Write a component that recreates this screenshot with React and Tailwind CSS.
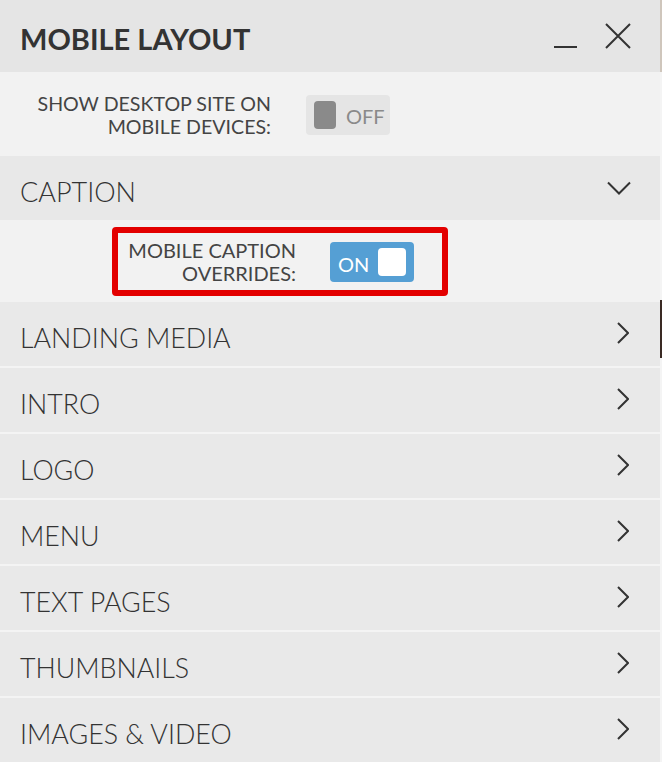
import { useState } from 'react';

const SECTIONS = ['LANDING MEDIA', 'INTRO', 'LOGO', 'MENU', 'TEXT PAGES', 'THUMBNAILS', 'IMAGES & VIDEO'];

function Chevron({ dir = 'right' }) {
  if (dir === 'down') {
    return (
      <svg width="24" height="14" viewBox="0 0 24 14" className="text-[#333]">
        <path d="M1 1.5 L12 12.5 L23 1.5" fill="none" stroke="currentColor" strokeWidth="2" />
      </svg>
    );
  }
  return (
    <svg width="12" height="22" viewBox="0 0 12 22" className="text-[#333]">
      <path d="M1 1 L11 11 L1 21" fill="none" stroke="currentColor" strokeWidth="2" />
    </svg>
  );
}

function Toggle({ on }) {
  if (on) {
    return (
      <div className="flex items-center w-[84px] h-[40px] rounded-[4px] bg-[#559fd4] pl-[8px] pr-[8px] justify-between">
        <span className="text-white text-[20px] leading-none pt-[3px]">ON</span>
        <span className="w-[28px] h-[28px] rounded-[4px] bg-white" />
      </div>
    );
  }
  return (
    <div className="flex items-center gap-[10px] w-[84px] h-[40px] rounded-[4px] bg-[#e5e5e5] pl-[8px]">
      <span className="w-[22px] h-[28px] rounded-[4px] bg-[#8a8a8a]" />
      <span className="text-[#8a8a8a] text-[20px] leading-none pt-[2px]">OFF</span>
    </div>
  );
}

export default function App() {
  const [open] = useState(true);

  return (
    <div className="flex w-[662px] h-[762px] overflow-hidden font-['Lato','Liberation_Sans',sans-serif] text-[#333]">
      <div className="w-[660px] flex flex-col bg-[#e9e9e9]">
        {/* Header */}
        <div className="h-[72px] shrink-0 flex items-center bg-[#e5e5e5] pl-[20px] pr-[29px]">
          <h1 className="flex-1 text-[29px] font-bold text-[#333] pt-[6px]">MOBILE LAYOUT</h1>
          <span className="w-[23px] h-[2px] bg-[#333] mt-[22px] mr-[28px]" />
          <svg width="26" height="26" viewBox="0 0 26 26" className="text-[#333]">
            <path d="M1 1 L25 25 M25 1 L1 25" stroke="currentColor" strokeWidth="2" />
          </svg>
        </div>

        {/* Desktop site toggle */}
        <div className="h-[84px] shrink-0 flex items-center bg-[#f2f2f2] pl-[20px]">
          <div className="w-[251px] text-right text-[19.6px] leading-[23px] text-[#444] pt-[2px]">
            SHOW DESKTOP SITE ON
            <br />
            MOBILE DEVICES:
          </div>
          <div className="ml-[35px] mt-[2px]">
            <Toggle on={false} />
          </div>
        </div>

        {/* Caption */}
        <div className="h-[64px] shrink-0 flex items-center justify-between bg-[#e8e8e8] pl-[20px] pr-[29px]">
          <span className="text-[27px] font-light text-[#333] pt-[8px]">CAPTION</span>
          <Chevron dir="down" />
        </div>

        {open && (
          <div className="h-[82px] shrink-0 flex items-center bg-[#f2f2f2] pl-[112px]">
            <div className="flex items-center w-[336px] h-[69px] border-[6px] border-[#e30000] rounded-[4px] pl-[10px]">
              <div className="w-[168px] text-right text-[20px] leading-[23px] text-[#444] pt-[2px]">
                MOBILE CAPTION
                <br />
                OVERRIDES:
              </div>
              <div className="ml-[34px] mt-[2px]">
                <Toggle on />
              </div>
            </div>
          </div>
        )}

        {/* Sections */}
        {SECTIONS.map((s) => (
          <div
            key={s}
            className="h-[66px] shrink-0 flex items-center justify-between bg-[#e9e9e9] border-b-2 border-[#f4f4f4] pl-[20px] pr-[31px]"
          >
            <span className="text-[26.8px] font-light text-[#333] pt-[9px]">{s}</span>
            <span className="-mt-[2px]">
              <Chevron />
            </span>
          </div>
        ))}
      </div>

      {/* Page behind the panel */}
      <div className="w-[2px] flex flex-col bg-[#f4f4f4]">
        <div className="h-[72px] bg-[#cfc6bc]" />
        <div className="h-[228px]" />
        <div className="h-[58px] bg-[#3a2a24]" />
      </div>
    </div>
  );
}
